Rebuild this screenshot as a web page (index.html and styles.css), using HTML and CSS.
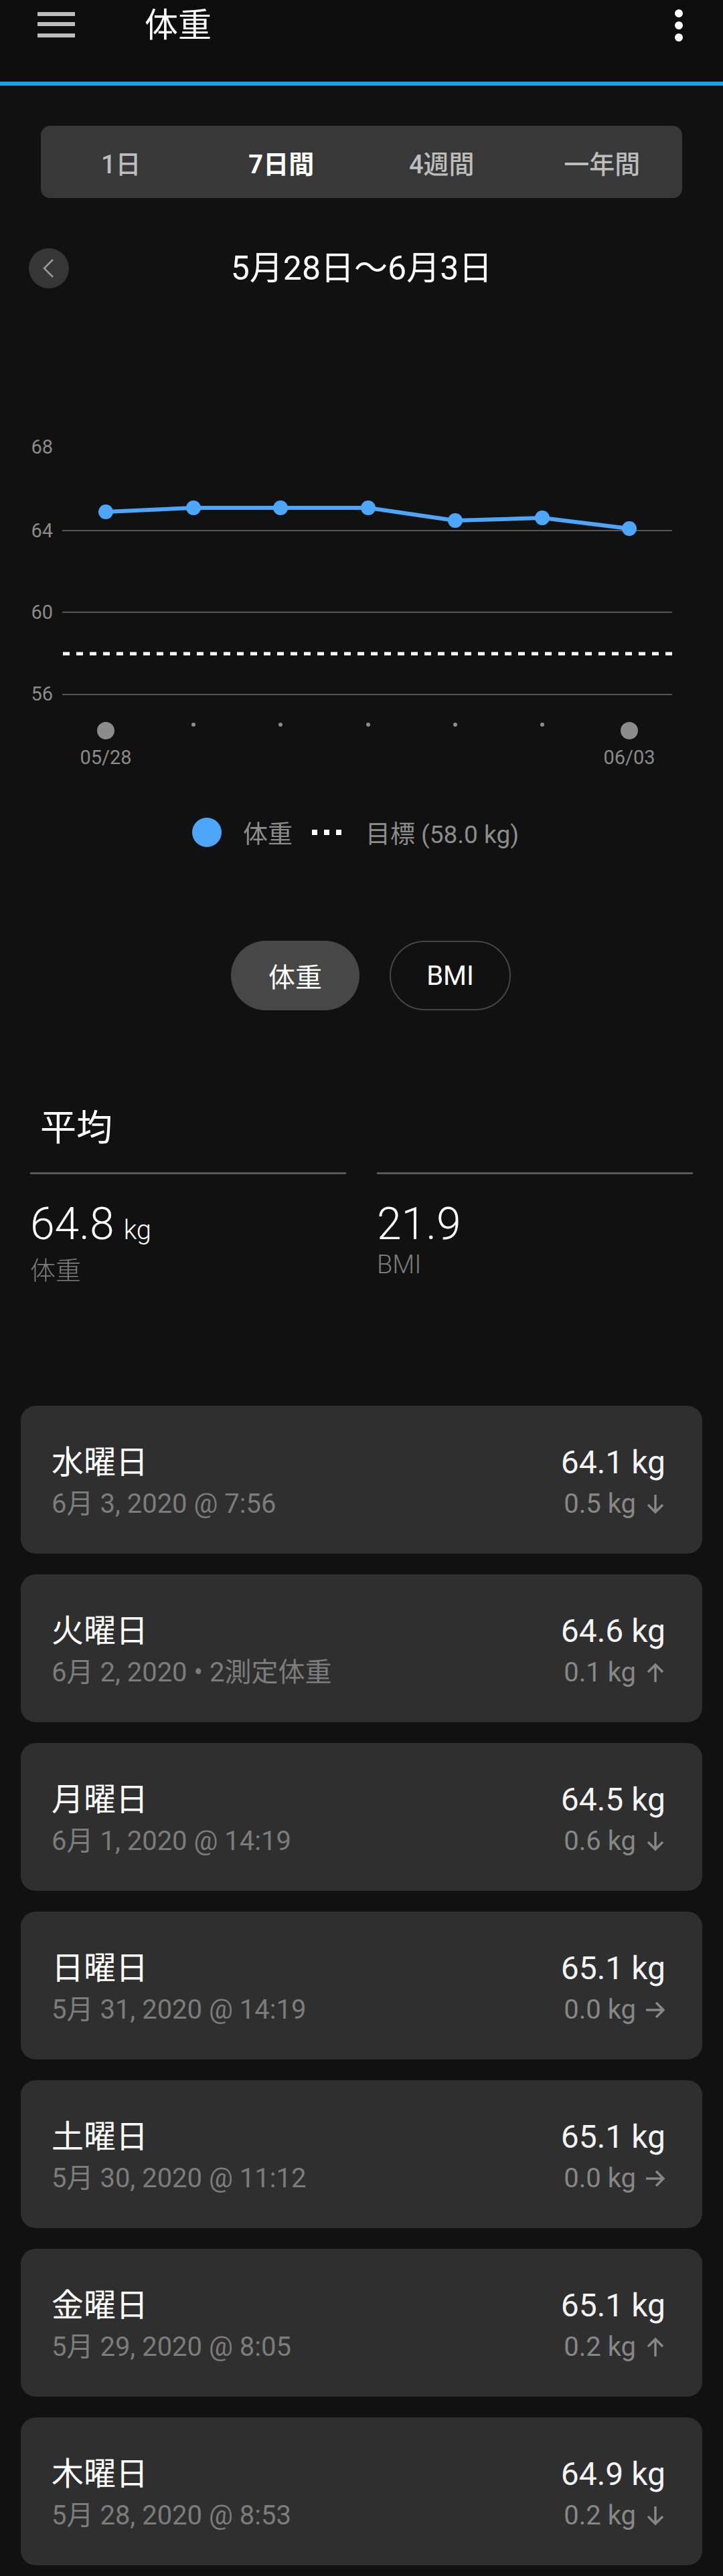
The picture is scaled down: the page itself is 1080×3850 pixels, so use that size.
FILE: index.html
```html
<!DOCTYPE html>
<html lang="ja">
<head>
  <meta charset="UTF-8" />
  <meta name="viewport" content="width=device-width, initial-scale=1.0"/>
  <title>体重</title>
  <link rel="stylesheet" href="styles.css">
</head>
<body>
  <header class="app-bar">
    <div class="app-bar-row">
      <svg class="menu-icon" width="56" height="44" viewBox="0 0 56 44">
        <rect x="0" y="2" width="56" height="6" fill="#bdbdbd"/>
        <rect x="0" y="17" width="56" height="6" fill="#bdbdbd"/>
        <rect x="0" y="34" width="56" height="6" fill="#bdbdbd"/>
      </svg>
      <h1 class="title">体重</h1>
      <svg class="more-icon" width="12" height="48" viewBox="0 0 12 48">
        <circle cx="6" cy="6" r="6" fill="#fff"/>
        <circle cx="6" cy="24" r="6" fill="#fff"/>
        <circle cx="6" cy="42" r="6" fill="#fff"/>
      </svg>
    </div>
  </header>

  <main>
    <div class="range-tabs">
      <div class="tab">1日</div>
      <div class="tab active">7日間</div>
      <div class="tab">4週間</div>
      <div class="tab">一年間</div>
    </div>

    <div class="date-nav">
      <div class="back-btn">
        <svg width="60" height="60" viewBox="0 0 60 60">
          <path d="M36 17 L23 30 L36 43" fill="none" stroke="#9a9a9a" stroke-width="2.5"/>
        </svg>
      </div>
      <div class="date-range">5月28日〜6月3日</div>
      <div></div>
    </div>

    <!-- chart: y = page y - 431 -->
    <svg class="chart" width="1080" height="730" viewBox="0 0 1080 730">
      <g font-family="Roboto, sans-serif" font-size="29" fill="#8a8a8a" text-anchor="end">
        <text x="79" y="247">68</text>
        <text x="79" y="372">64</text>
        <text x="79" y="494">60</text>
        <text x="79" y="616">56</text>
      </g>
      <g stroke="#6c6c6c" stroke-width="1.5">
        <line x1="93" y1="362" x2="1004" y2="362"/>
        <line x1="93" y1="484" x2="1004" y2="484"/>
        <line x1="93" y1="607" x2="1004" y2="607"/>
      </g>
      <line x1="94" y1="546" x2="1004" y2="546" stroke="#fff" stroke-width="5" stroke-dasharray="10 10"/>
      <polyline points="158,334 289,328 419,328 550,328 680,347 810,343 940,359" fill="none" stroke="#4ea6fb" stroke-width="6" stroke-linejoin="round"/>
      <g fill="#4ea6fb">
        <circle cx="158" cy="334" r="11"/>
        <circle cx="289" cy="328" r="11"/>
        <circle cx="419" cy="328" r="11"/>
        <circle cx="550" cy="328" r="11"/>
        <circle cx="680" cy="347" r="11"/>
        <circle cx="810" cy="343" r="11"/>
        <circle cx="940" cy="359" r="11"/>
      </g>
      <g fill="#8c8c8c">
        <circle cx="158" cy="661" r="13"/>
        <circle cx="289" cy="652" r="3"/>
        <circle cx="419" cy="652" r="3"/>
        <circle cx="550" cy="652" r="3"/>
        <circle cx="680" cy="652" r="3"/>
        <circle cx="810" cy="652" r="3"/>
        <circle cx="940" cy="661" r="13"/>
      </g>
      <g font-family="Roboto, sans-serif" font-size="29" fill="#8a8a8a" text-anchor="middle">
        <text x="158" y="711">05/28</text>
        <text x="940" y="711">06/03</text>
      </g>
    </svg>

    <div class="legend">
      <span class="legend-dot"></span>
      <span>体重</span>
      <span class="legend-goal"><i></i><i></i><i></i></span>
      <span>目標 (58.0 kg)</span>
    </div>

    <div class="metric-toggle">
      <div class="pill active">体重</div>
      <div class="pill outline">BMI</div>
    </div>

    <section class="average">
      <h2>平均</h2>
      <div class="stats">
        <div class="stat">
          <div class="stat-value">64.8<span class="stat-unit">kg</span></div>
          <div class="stat-label">体重</div>
        </div>
        <div class="stat">
          <div class="stat-value">21.9</div>
          <div class="stat-label">BMI</div>
        </div>
      </div>
    </section>

    <div class="readings">
      <div class="reading">
        <div class="day">水曜日</div>
        <div class="weight">64.1 kg</div>
        <div class="when">6月 3, 2020 @ 7:56</div>
        <div class="delta">0.5 kg <svg width="30" height="30" viewBox="0 0 30 30"><path d="M15 1v26M4 16l11 11 11-11" fill="none" stroke="#878787" stroke-width="3.5"/></svg></div>
      </div>
      <div class="reading">
        <div class="day">火曜日</div>
        <div class="weight">64.6 kg</div>
        <div class="when">6月 2, 2020 • 2測定体重</div>
        <div class="delta">0.1 kg <svg width="30" height="30" viewBox="0 0 30 30"><path d="M15 29V3M4 14L15 3l11 11" fill="none" stroke="#878787" stroke-width="3.5"/></svg></div>
      </div>
      <div class="reading">
        <div class="day">月曜日</div>
        <div class="weight">64.5 kg</div>
        <div class="when">6月 1, 2020 @ 14:19</div>
        <div class="delta">0.6 kg <svg width="30" height="30" viewBox="0 0 30 30"><path d="M15 1v26M4 16l11 11 11-11" fill="none" stroke="#878787" stroke-width="3.5"/></svg></div>
      </div>
      <div class="reading">
        <div class="day">日曜日</div>
        <div class="weight">65.1 kg</div>
        <div class="when">5月 31, 2020 @ 14:19</div>
        <div class="delta">0.0 kg <svg width="30" height="30" viewBox="0 0 30 30"><path d="M1 15h26M16 4l11 11-11 11" fill="none" stroke="#878787" stroke-width="3.5"/></svg></div>
      </div>
      <div class="reading">
        <div class="day">土曜日</div>
        <div class="weight">65.1 kg</div>
        <div class="when">5月 30, 2020 @ 11:12</div>
        <div class="delta">0.0 kg <svg width="30" height="30" viewBox="0 0 30 30"><path d="M1 15h26M16 4l11 11-11 11" fill="none" stroke="#878787" stroke-width="3.5"/></svg></div>
      </div>
      <div class="reading">
        <div class="day">金曜日</div>
        <div class="weight">65.1 kg</div>
        <div class="when">5月 29, 2020 @ 8:05</div>
        <div class="delta">0.2 kg <svg width="30" height="30" viewBox="0 0 30 30"><path d="M15 29V3M4 14L15 3l11 11" fill="none" stroke="#878787" stroke-width="3.5"/></svg></div>
      </div>
      <div class="reading">
        <div class="day">木曜日</div>
        <div class="weight">64.9 kg</div>
        <div class="when">5月 28, 2020 @ 8:53</div>
        <div class="delta">0.2 kg <svg width="30" height="30" viewBox="0 0 30 30"><path d="M15 1v26M4 16l11 11 11-11" fill="none" stroke="#878787" stroke-width="3.5"/></svg></div>
      </div>
    </div>
  </main>
</body>
</html>
```

FILE: styles.css
```css
body {
  margin: 0;
  background: #111111;
  color: #ffffff;
  font-family: Roboto, "Noto Sans CJK JP", sans-serif;
}

.app-bar {
  height: 122px;
  background: #0d0d0d;
  border-bottom: 6px solid #18a3e4;
}

.app-bar-row {
  height: 76px;
  display: flex;
  align-items: center;
  padding: 0 60px 0 56px;
}

.title {
  flex: 1;
  margin: 0 0 0 104px;
  font-size: 50px;
  font-weight: 400;
  line-height: 60px;
}

.range-tabs {
  margin: 60px 61px 0;
  height: 108px;
  background: #383838;
  border-radius: 14px;
  display: grid;
  grid-template-columns: repeat(4, 1fr);
  align-items: center;
  text-align: center;
  font-size: 38px;
  font-weight: 500;
  color: #bdbdbd;
}

.range-tabs .active {
  color: #ffffff;
  font-weight: 700;
}

.date-nav {
  margin-top: 75px;
  height: 60px;
  padding: 0 43px;
  display: grid;
  grid-template-columns: 60px 1fr 60px;
  align-items: center;
}

.back-btn {
  width: 60px;
  height: 60px;
  border-radius: 50%;
  background: #363636;
}

.back-btn svg {
  display: block;
}

.date-range {
  text-align: center;
  font-size: 50px;
  line-height: 60px;
}

.chart {
  display: block;
}

.legend {
  margin-top: 61px;
  height: 44px;
  padding-right: 18px;
  display: flex;
  justify-content: center;
  align-items: center;
  font-size: 37px;
  color: #8c8c8c;
}

.legend-dot {
  width: 44px;
  height: 44px;
  border-radius: 50%;
  background: #4ea6fb;
  margin-right: 32px;
}

.legend-goal {
  display: flex;
  gap: 10px;
  margin: 0 36px 0 29px;
}

.legend-goal i {
  width: 8px;
  height: 8px;
  background: #ffffff;
}

.metric-toggle {
  margin-top: 140px;
  padding-left: 28px;
  display: flex;
  justify-content: center;
  gap: 45px;
}

.pill {
  height: 104px;
  box-sizing: border-box;
  border-radius: 52px;
  display: flex;
  align-items: center;
  justify-content: center;
  font-size: 40px;
}

.pill.active {
  width: 192px;
  background: #474747;
}

.pill.outline {
  width: 181px;
  border: 2px solid #454545;
}

.average h2 {
  margin: 147px 0 0;
  padding-left: 60px;
  font-size: 54px;
  font-weight: 400;
  line-height: 60px;
}

.stats {
  margin-top: 35px;
  padding: 0 45px;
  display: grid;
  grid-template-columns: 1fr 1fr;
  gap: 46px;
}

.stat {
  border-top: 3px solid #5a5a5a;
  padding-top: 42px;
}

.stat-value {
  font-size: 66px;
  font-weight: 300;
  line-height: 66px;
}

.stat-unit {
  font-size: 40px;
  margin-left: 14px;
}

.stat-label {
  margin-top: 5px;
  font-size: 38px;
  font-weight: 300;
  line-height: 44px;
  color: #7b7b7b;
}

.readings {
  margin-top: 180px;
  padding: 0 31px;
  display: flex;
  flex-direction: column;
  gap: 31px;
}

.reading {
  height: 221px;
  box-sizing: border-box;
  padding: 55px 55px 0 46px;
  background: #2f2f2f;
  border-radius: 22px;
  display: grid;
  grid-template-columns: 1fr auto;
  grid-template-rows: 60px 64px;
}

.day,
.weight {
  font-size: 48px;
  line-height: 60px;
}

.weight {
  text-align: right;
  color: #f4f4f4;
}

.when {
  font-size: 40px;
  line-height: 64px;
  color: #7c7c7c;
}

.delta {
  display: flex;
  align-items: center;
  justify-content: flex-end;
  gap: 14px;
  font-size: 40px;
  line-height: 64px;
  color: #878787;
}
```
